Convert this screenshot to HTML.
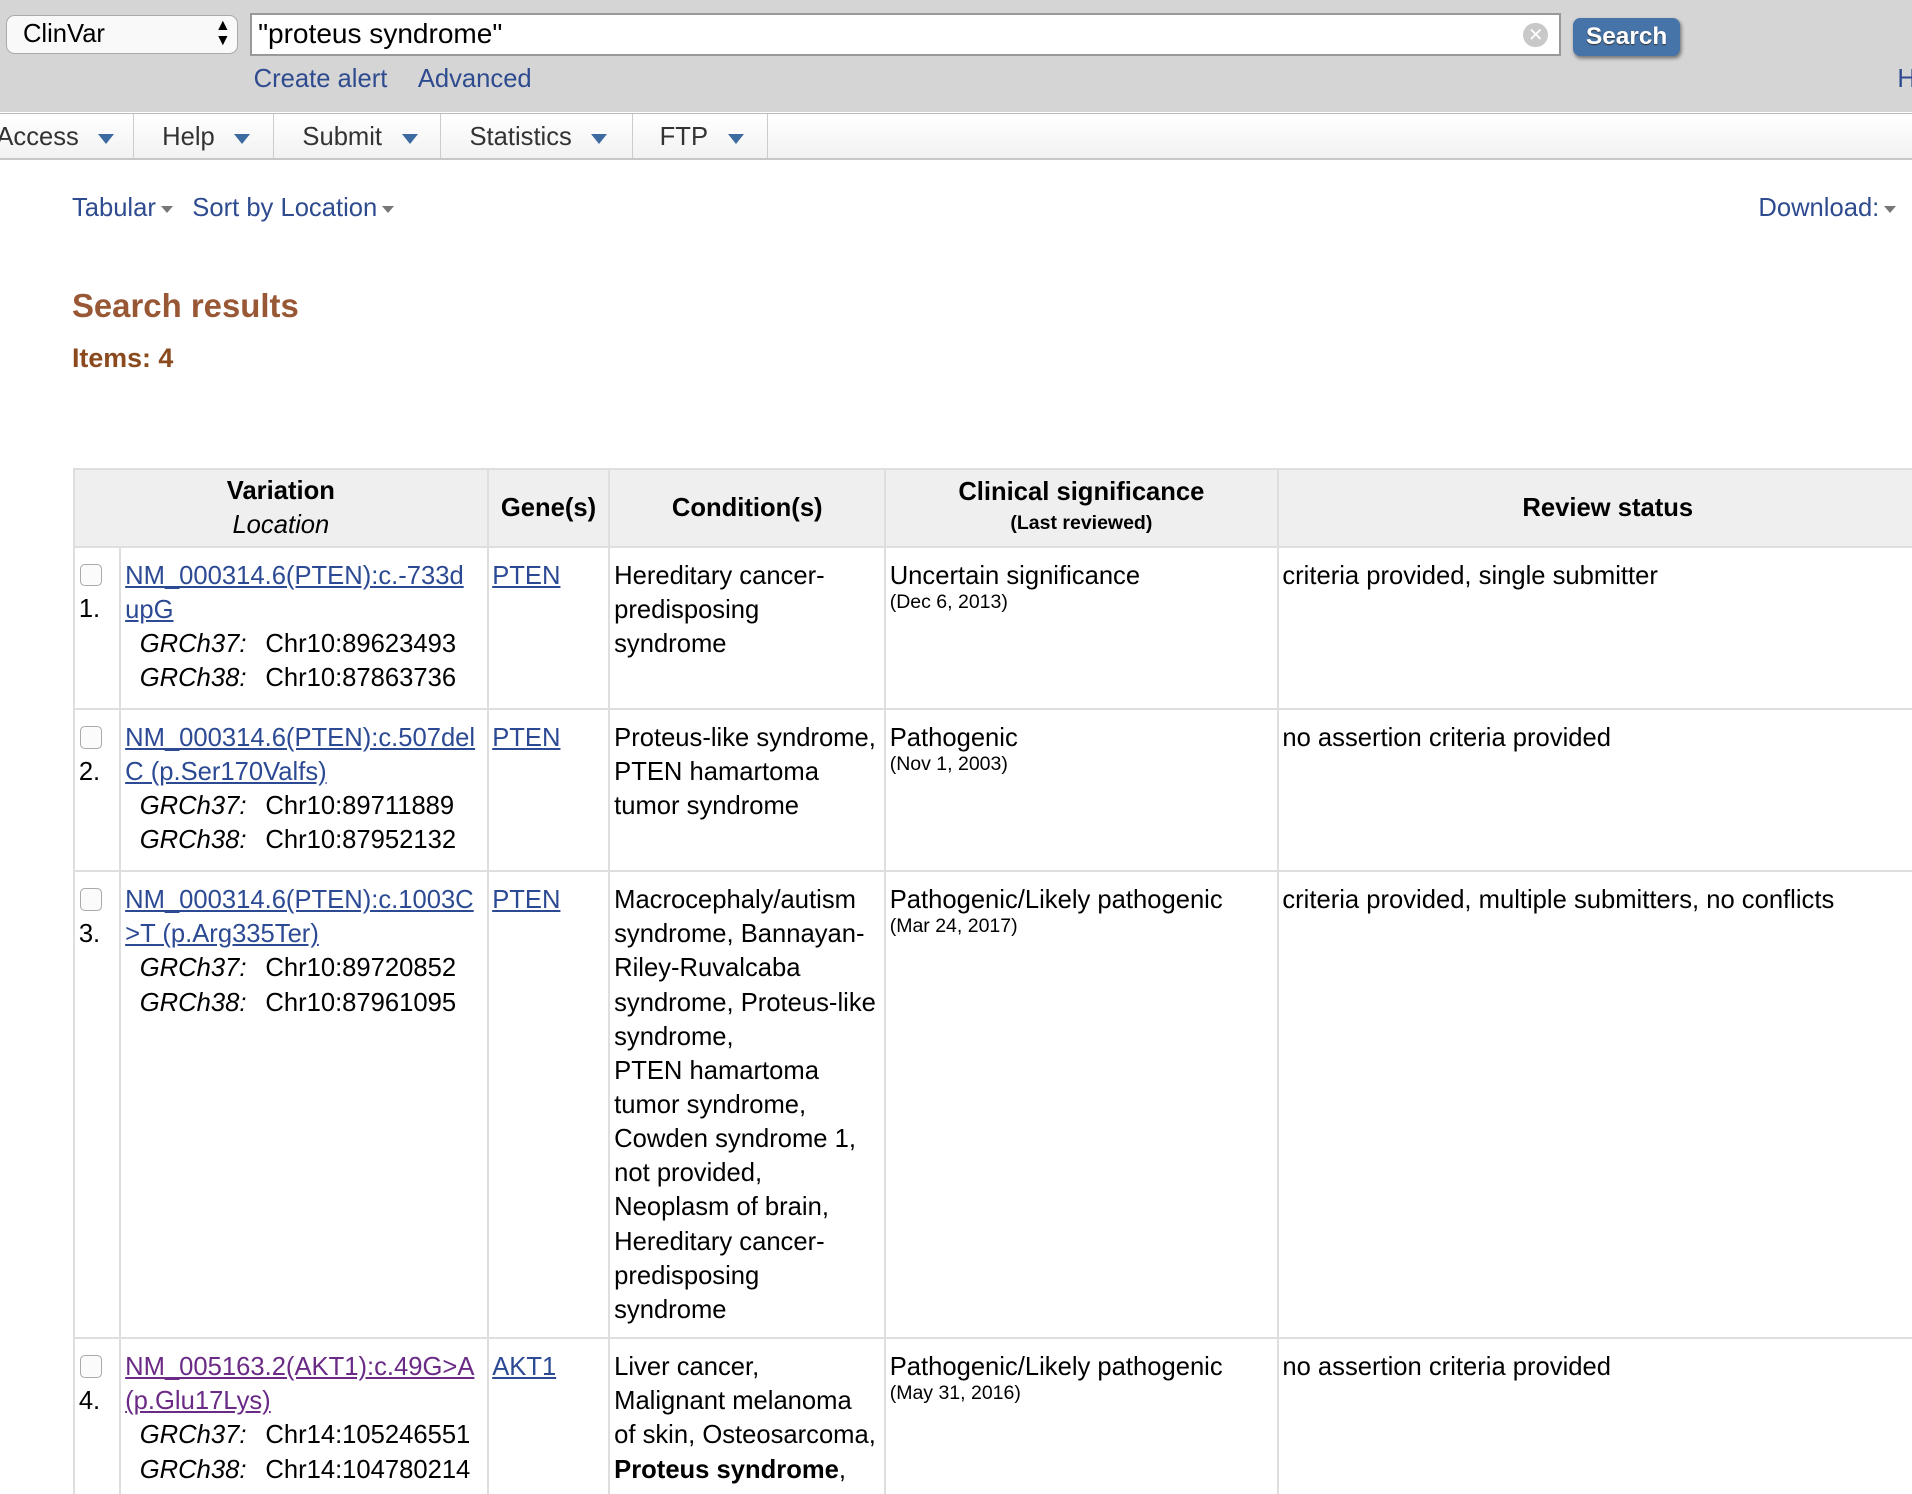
<!DOCTYPE html>
<html><head><meta charset="utf-8">
<style>
html,body{margin:0;padding:0;background:#fff;overflow:hidden;width:1912px;height:1494px}
#w{zoom:1.21939;width:1568px;height:1226px;position:relative;overflow:hidden;font-family:"Liberation Sans",Arial,sans-serif;color:#000;font-size:21px}
.abs{position:absolute}
.top{left:0;top:0;width:1568px;height:92px;background:#d5d5d5}
.sel{left:5px;top:12px;width:190px;height:32px;border:1px solid #aaa;border-radius:7px;background:#f9f9f9;box-sizing:border-box;font-size:21px;line-height:30px;padding-left:13px}
.inp{left:205px;top:11px;width:1075px;height:35px;border:2px solid #999;background:#fff;box-sizing:border-box;font-size:23px;line-height:31px;padding-left:5px}
.btn{left:1290px;top:15px;width:88px;height:31px;background:#4674a8;border-radius:6px;color:#fff;font-weight:bold;font-size:20px;text-align:center;line-height:31px;box-shadow:1px 2px 3px #777;text-shadow:0 1px 1px #333}
.lk{color:#2f4b8f;text-decoration:none}
.nav{left:0;top:93px;width:1568px;height:36px;background:linear-gradient(#fff,#f2f2f2);border-top:1px solid #bbb;border-bottom:2px solid #c8c8c8}
.nav div{position:absolute;top:0;height:36px;line-height:38px;color:#333;border-right:1px solid #ccc;box-sizing:border-box;white-space:nowrap}
.tri{display:inline-block;width:0;height:0;border-left:7px solid transparent;border-right:7px solid transparent;border-top:9px solid #3d6aa0;vertical-align:middle;margin-left:16px}
.gt{display:inline-block;width:0;height:0;border-left:5px solid transparent;border-right:5px solid transparent;border-top:6px solid #777;vertical-align:middle;margin-left:4px}
table{position:absolute;left:60px;top:384px;border-collapse:collapse;width:1530px;line-height:28px;table-layout:fixed}
td,th{border:2px solid #dedede;vertical-align:top;padding:9px 3px 8px 3px;white-space:nowrap;overflow:hidden}
th{background:#efefef;vertical-align:middle;padding:3px 4px}
a.v{color:#2c4a94;text-decoration:underline}
a.p{color:#6a2a85;text-decoration:underline}
.cb{width:16px;height:17px;border:1px solid #aaa;border-radius:4px;background:#fbfbfb;margin:4px 0 5px 1px}
.g{padding-left:12px}
.g i{display:inline-block;width:103px}
.d{font-size:16px;line-height:16px;display:block}
</style></head><body><div id="w">
<div class="abs top"></div>
<div class="abs sel">ClinVar<span style="position:absolute;right:5px;top:0;font-size:13px;line-height:12px;padding-top:3px">▲<br>▼</span></div>
<div class="abs inp">"proteus syndrome"<span style="position:absolute;right:9px;top:6px;width:20px;height:20px;border-radius:50%;background:#c8c8c8;color:#fff;font-size:15px;line-height:20px;text-align:center">✕</span></div>
<div class="abs btn">Search</div>
<div class="abs" style="left:208px;top:53px"><span class="lk">Create alert</span><span class="lk" style="margin-left:25px">Advanced</span></div>
<div class="abs lk" style="left:1556px;top:53px">H</div>
<div class="abs nav">
<div style="left:-3px;width:113px">Access<span class="tri"></span></div>
<div style="left:110px;width:115px;padding-left:23px">Help<span class="tri"></span></div>
<div style="left:225px;width:137px;padding-left:23px">Submit<span class="tri"></span></div>
<div style="left:362px;width:157px;padding-left:23px">Statistics<span class="tri"></span></div>
<div style="left:519px;width:111px;padding-left:22px">FTP<span class="tri"></span></div>
</div>
<div class="abs" style="left:59px;top:159px"><span class="lk">Tabular</span><span class="gt"></span><span class="lk" style="margin-left:16px">Sort by Location</span><span class="gt"></span></div>
<div class="abs" style="left:1442px;top:159px"><span class="lk">Download:</span><span class="gt"></span></div>
<div class="abs" style="left:59px;top:235px;font-size:27px;font-weight:bold;color:#985735">Search results</div>
<div class="abs" style="left:59px;top:281px;font-size:22px;font-weight:bold;color:#8a4a1e">Items: 4</div>
<table>
<colgroup><col style="width:38px"><col style="width:301px"><col style="width:100px"><col style="width:226px"><col style="width:322px"><col></colgroup>
<tr style="height:63px"><th colspan="2" style="line-height:28px">Variation<br><i style="font-weight:normal">Location</i></th><th>Gene(s)</th><th>Condition(s)</th><th style="line-height:24px">Clinical significance<br><span style="font-size:16px">(Last reviewed)</span></th><th>Review status</th></tr>
<tr style="height:133px"><td><div class="cb"></div>1.</td><td><a class="v">NM_000314.6(PTEN):c.-733d<br>upG</a><div class="g"><i>GRCh37:</i>Chr10:89623493</div><div class="g"><i>GRCh38:</i>Chr10:87863736</div></td><td><a class="v">PTEN</a></td><td>Hereditary cancer-<br>predisposing<br>syndrome</td><td>Uncertain significance<span class="d">(Dec 6, 2013)</span></td><td>criteria provided, single submitter</td></tr>
<tr style="height:133px"><td><div class="cb"></div>2.</td><td><a class="v">NM_000314.6(PTEN):c.507del<br>C (p.Ser170Valfs)</a><div class="g"><i>GRCh37:</i>Chr10:89711889</div><div class="g"><i>GRCh38:</i>Chr10:87952132</div></td><td><a class="v">PTEN</a></td><td>Proteus-like syndrome,<br>PTEN hamartoma<br>tumor syndrome</td><td>Pathogenic<span class="d">(Nov 1, 2003)</span></td><td>no assertion criteria provided</td></tr>
<tr style="height:383px"><td><div class="cb"></div>3.</td><td><a class="v">NM_000314.6(PTEN):c.1003C<br>&gt;T (p.Arg335Ter)</a><div class="g"><i>GRCh37:</i>Chr10:89720852</div><div class="g"><i>GRCh38:</i>Chr10:87961095</div></td><td><a class="v">PTEN</a></td><td>Macrocephaly/autism<br>syndrome, Bannayan-<br>Riley-Ruvalcaba<br>syndrome, Proteus-like<br>syndrome,<br>PTEN hamartoma<br>tumor syndrome,<br>Cowden syndrome 1,<br>not provided,<br>Neoplasm of brain,<br>Hereditary cancer-<br>predisposing<br>syndrome</td><td>Pathogenic/Likely pathogenic<span class="d">(Mar 24, 2017)</span></td><td>criteria provided, multiple submitters, no conflicts</td></tr>
<tr style="height:200px"><td><div class="cb"></div>4.</td><td><a class="p">NM_005163.2(AKT1):c.49G&gt;A<br>(p.Glu17Lys)</a><div class="g"><i>GRCh37:</i>Chr14:105246551</div><div class="g"><i>GRCh38:</i>Chr14:104780214</div></td><td><a class="v">AKT1</a></td><td>Liver cancer,<br>Malignant melanoma<br>of skin, Osteosarcoma,<br><b>Proteus syndrome</b>,</td><td>Pathogenic/Likely pathogenic<span class="d">(May 31, 2016)</span></td><td>no assertion criteria provided</td></tr>
</table>
</div></body></html>
